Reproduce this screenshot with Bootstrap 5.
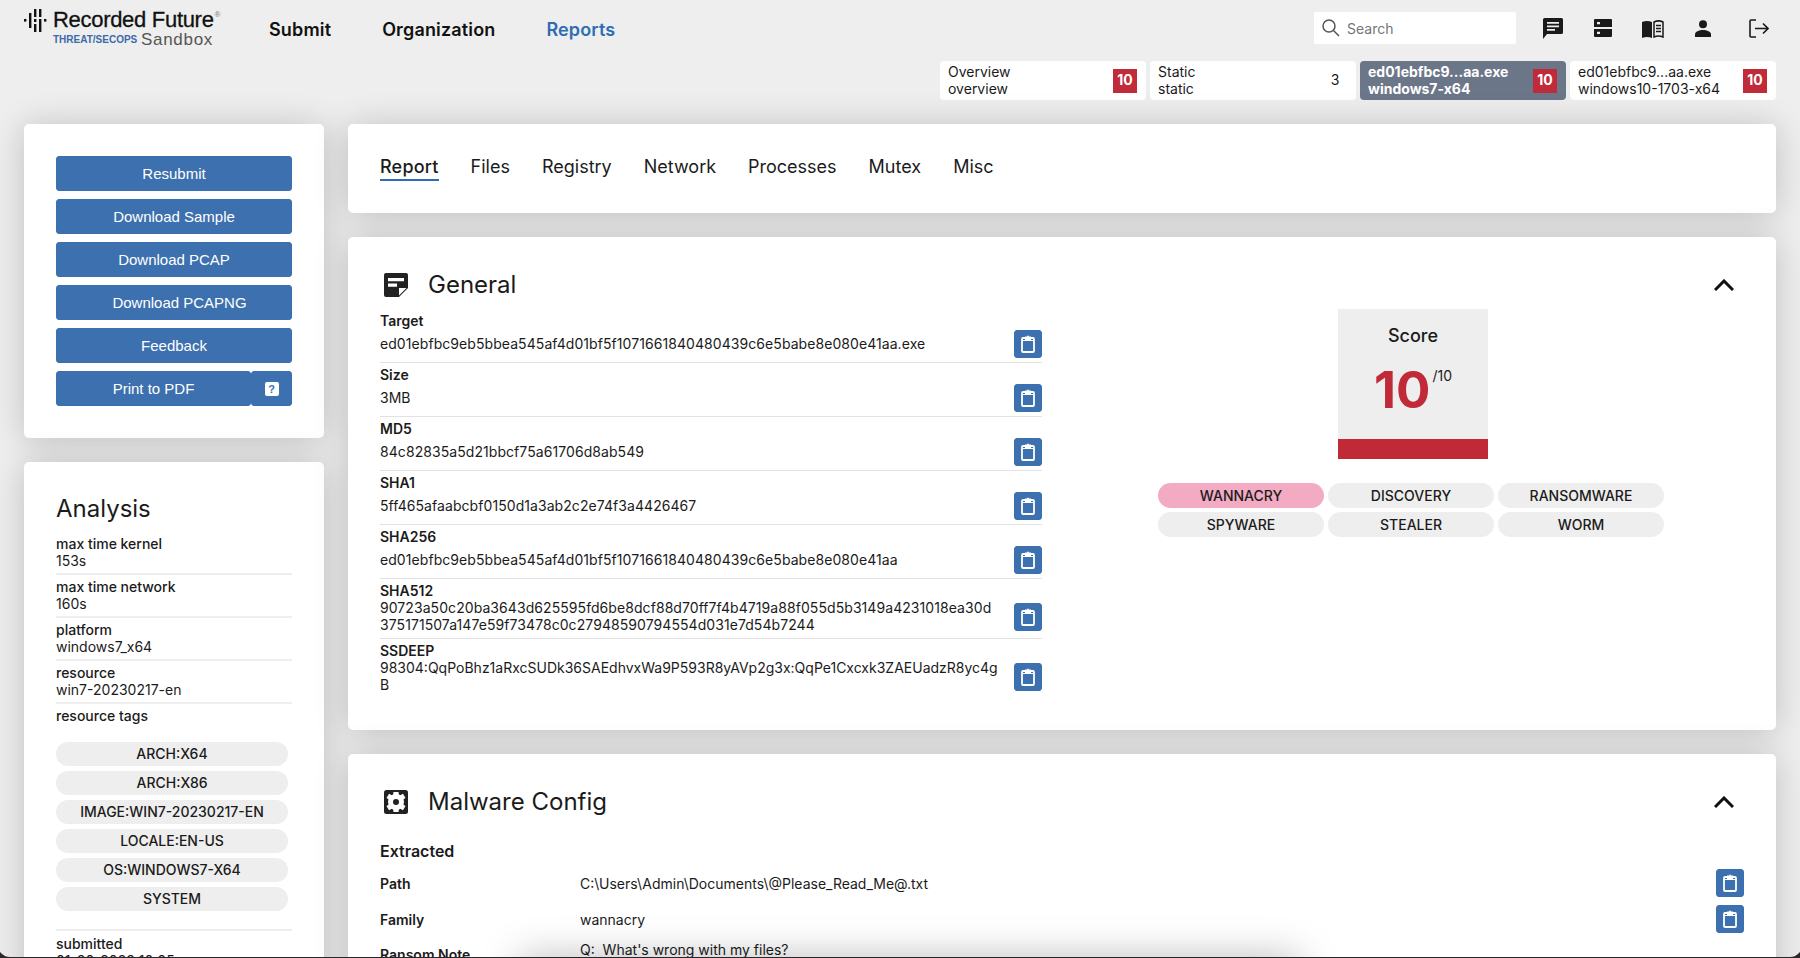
<!DOCTYPE html>
<html lang="en">
<head>
<meta charset="utf-8">
<title>Recorded Future Sandbox</title>
<link href="https://cdn.jsdelivr.net/npm/bootstrap@5.3.0/dist/css/bootstrap.min.css" rel="stylesheet">
<style>
html,body{height:958px;overflow:hidden}
body{background:#eee;font-family:Inter,"Liberation Sans",sans-serif;color:#1b1b1b;font-size:14px;line-height:17px}
.rf-top{height:61px;padding:0 24px;align-items:flex-start}
.rf-logo{width:245px;height:61px;position:relative;flex:none}
.rf-logo svg{position:absolute;left:0;top:8px}
.rf-logo-main{position:absolute;left:29px;top:6px;font:22px/28px "Liberation Sans",sans-serif;color:#111;letter-spacing:-.3px;white-space:nowrap;-webkit-text-stroke:.3px #111}
.rf-logo-main sup{font-size:8px;top:-1.2em;color:#777;margin-left:1px;-webkit-text-stroke:0}
.rf-logo-sub{position:absolute;left:29px;top:33px;font:bold 10px/13px "Liberation Sans",sans-serif;color:#3d6aa8;white-space:nowrap}
.rf-logo-box{position:absolute;left:117px;top:30px;font:17px/20px "Liberation Sans",sans-serif;color:#555;letter-spacing:.7px}
.rf-menu{gap:51px;padding-top:21px}
.rf-menu a{font-size:18px;line-height:18px;font-weight:600;color:#111;text-decoration:none;letter-spacing:.15px}
.rf-menu a.is-on{color:#2f6db3}
.rf-search{width:202px;height:32px;background:#fff;border-radius:2px;margin-top:12px;padding-left:8px;gap:7px;color:#757575}
.rf-icons{margin-top:18px;margin-left:27px;margin-right:7px;align-items:flex-start}
.rf-icons svg:nth-child(1){margin-right:31px}
.rf-icons svg:nth-child(2){margin-right:30px;margin-top:1px}
.rf-icons svg:nth-child(3){margin-right:31px;margin-top:2px}
.rf-icons svg:nth-child(4){margin-right:38px;margin-top:2px}
.rf-icons svg:nth-child(5){margin-top:1px}
.rf-sub{justify-content:flex-end;gap:4px;padding:0 24px;height:39px}
.rf-tab{width:206px;height:39px;background:#fff;border-radius:4px;padding:0 9px 0 8px;align-items:center;justify-content:space-between;line-height:16.5px;white-space:nowrap}
.rf-tab.is-on{background:#6c7689;color:#fff;font-weight:700}
.rf-num{width:24px;height:24px;display:flex;align-items:center;justify-content:center;background:#c12a38;color:#fff;font-weight:700;font-size:14px}
.rf-num.is-plain{background:none;color:#1b1b1b;font-weight:400}
.rf-page{gap:24px;padding:24px 24px 0;align-items:flex-start}
.rf-side{width:300px;flex:none;gap:24px}
.rf-main{flex:1;gap:24px;min-width:0}
.rf-panel{border:0;border-radius:5px;box-shadow:0 2px 34px rgba(0,0,0,.2);background:#fff;padding:32px}
.rf-actions{gap:8px;height:314px}
.rf-btn{--bs-btn-bg:#3d70ae;--bs-btn-border-color:#3a6fb0;--bs-btn-color:#fff;height:35px;padding:0;border-radius:3px;font:15px/33px "Liberation Sans",sans-serif;width:100%}
.rf-btn.is-off{padding-left:11px}
.rf-split .rf-btn:first-child{width:195px;flex:none}
.rf-split .rf-btn:last-child{flex:1;display:flex;align-items:center;justify-content:center}
.rf-help{width:14px;height:14px;background:#fff;border-radius:2px;color:#3d70ae;font:bold 11px/14px "Liberation Sans",sans-serif;text-align:center}
.rf-h{font-size:24px;line-height:30px;font-weight:400;margin:0}
.rf-analysis{padding-top:32px;height:560px}
.rf-analysis .rf-h{margin-bottom:7.5px}
.rf-meta{padding:3.5px 0 3.5px;height:43px;border-bottom:2px solid #eee;flex:none}
.rf-meta b{font-weight:500;display:block}
.rf-meta.is-open{border:0;height:auto}
.rf-tags{gap:4.5px;width:232px;margin:14px 0 17.5px;flex:none}
.rf-pill{background:#eee;border-radius:13px;height:24.5px;line-height:24.5px;text-align:center;font-weight:500;font-size:14px;text-transform:uppercase}
.rf-pill.is-fam{background:#f2abc2}
.rf-rule{border-top:2px solid #eee;padding-top:4px}
.rf-nav{height:89px;padding:0 32px;display:flex;align-items:center}
.rf-nav .nav{gap:32px}
.rf-nav .nav-link{padding:0 0 1px;font-size:18px;line-height:22px;color:#1b1b1b;border-bottom:2px solid transparent}
.rf-nav .nav-link.active{font-weight:500;border-bottom-color:#2f6db3;letter-spacing:.2px}
.rf-general{height:493px;padding-top:0;padding-bottom:0}
.rf-head-g{height:72px;flex:none;padding-top:24px;padding-left:4px;gap:20px;padding-right:10px}
.rf-chev{margin-left:auto}
.rf-cols{--bs-gutter-x:40px}
.rf-kv{padding:4px 0;border-bottom:1px solid #e2e2e2}
.rf-kv:last-child{border:0}
.rf-kv b{font-weight:600;display:block;margin:-1px 0 1px}
.rf-kv-body{min-height:28px;justify-content:space-between;align-items:center}
.rf-hash{white-space:nowrap;transform:translateY(-1px)}
.rf-hash.is-hex{letter-spacing:.067px}
.rf-copy{--bs-btn-bg:#3d70ae;--bs-btn-border-color:#3a6fb0;width:28px;height:28px;padding:0;flex:none;display:flex;align-items:center;justify-content:center;border-radius:3px}
.rf-score{width:150px;height:150px;background:#eee;margin:0 auto 24px;text-align:center;position:relative}
.rf-score-t{font-size:18px;font-weight:500;line-height:22px;padding-top:16px}
.rf-score-v{color:#c12a38;font-size:51px;line-height:50px;font-weight:700;margin-top:18px;display:flex;justify-content:center}
.rf-score-v sup{font-size:14px;font-weight:400;color:#1b1b1b;position:static;line-height:14px;margin:4px 0 0 2px}
.rf-score-bar{position:absolute;left:0;right:0;bottom:0;height:20px;background:#bf2a36}
.rf-pills{display:grid;grid-template-columns:repeat(3,1fr);gap:4px;width:510px;padding-right:4px;margin:0 auto}
.rf-pills .rf-pill{height:25px;line-height:25px}
.rf-cfg{padding-top:0;height:300px}
.rf-sec{font-size:16px;font-weight:600;line-height:20px;margin:15px 0 4px}
.rf-cfg-row{height:36px;flex:none;align-items:center}
.rf-cfg-row b{width:200px;flex:none;font-weight:600}
.rf-cfg-row .rf-copy{margin-left:auto}
.rf-cfg-row.is-long{align-items:flex-start;white-space:pre}
.rf-cfg-row.is-long b{padding-top:8.5px}
.rf-cfg-row.is-long span{padding-top:3.5px}
.rf-note{position:fixed;left:520px;width:780px;bottom:-40px;height:40px;box-shadow:0 0 40px rgba(0,0,0,.28);z-index:5}
.rf-frame{position:fixed;inset:0;overflow:hidden;pointer-events:none;z-index:9}
.rf-frame i{position:absolute;left:-2px;right:-2px;top:-30px;bottom:1px;border-radius:0 0 12px 12px;box-shadow:0 0 0 14px #2b2529}
</style>
</head>
<body>
<svg class="d-none"><symbol id="rf-clip" viewBox="0 0 14 18"><path fill="none" stroke="#fff" stroke-width="1.800" d="M4.500 3H2a1 1 0 0 0-1 1v12a1 1 0 0 0 1 1h10a1 1 0 0 0 1-1V4a1 1 0 0 0-1-1H9.500"/><path fill="#fff" d="M4 1.500h2l1-1.200 1 1.200h2V5H4z"/><path stroke="#fff" stroke-width="1" d="M1 5.500h12"/></symbol></svg>
<header>
  <div class="d-flex rf-top">
    <a class="rf-logo text-decoration-none" href="#">
      <svg width="28" height="26" viewBox="0 0 28 26"><g fill="#111"><rect x="0" y="11" width="2.400" height="2.600"/><rect x="5" y="5" width="2.400" height="15"/><rect x="10" y="1" width="2.400" height="8"/><rect x="10" y="11" width="2.400" height="3"/><rect x="10" y="16" width="2.400" height="8"/><rect x="15" y="1" width="2.400" height="8"/><rect x="15" y="11" width="2.400" height="13"/><rect x="20" y="11" width="2.400" height="2.600"/></g></svg>
      <span class="rf-logo-main">Recorded Future<sup>®</sup></span>
      <span class="rf-logo-sub">THREAT/SECOPS</span>
      <span class="rf-logo-box">Sandbox</span>
    </a>
    <nav class="d-flex rf-menu">
      <a href="#">Submit</a><a href="#">Organization</a><a href="#" class="is-on">Reports</a>
    </nav>
    <div class="ms-auto d-flex">
      <div class="d-flex align-items-center rf-search">
        <svg width="18" height="18" viewBox="0 0 18 18" fill="none" stroke="#555" stroke-width="1.500"><circle cx="7" cy="7" r="6"/><path d="M11.500 11.500 17 17"/></svg>
        <span>Search</span>
      </div>
      <div class="d-flex rf-icons">
        <svg width="20" height="21" viewBox="0 0 20 21"><path fill="#1a1a1a" d="M1.500 0h17A1.500 1.500 0 0 1 20 1.500v13a1.500 1.500 0 0 1-1.500 1.500H4l-4 5V1.500A1.500 1.500 0 0 1 1.500 0z"/><path fill="#eee" d="M4 4h12v1.800H4zM4 7.500h12v1.800H4zM4 11h8v1.800H4z"/></svg>
        <svg width="18" height="18" viewBox="0 0 18 18"><path fill="#1a1a1a" d="M1 0h16a1 1 0 0 1 1 1v7H0V1a1 1 0 0 1 1-1zM0 10h18v7a1 1 0 0 1-1 1H1a1 1 0 0 1-1-1z"/><path fill="#eee" d="M3 3h3v2.200H3zM3 12.800h3V15H3z"/></svg>
        <svg width="22" height="18" viewBox="0 0 22 18"><path fill="#1a1a1a" d="M0 2C3 .5 7 .5 10 2v16C7 16.500 3 16.500 0 18z"/><path fill="none" stroke="#1a1a1a" stroke-width="1.500" d="M12 2c3-1.500 6-1.500 9 0v15c-3-1.200-6-1.200-9 0z"/><path stroke="#1a1a1a" stroke-width="1.300" d="M14 5.500h5M14 8.500h5M14 11.500h5"/></svg>
        <svg width="16" height="17" viewBox="0 0 16 17"><circle fill="#1a1a1a" cx="8" cy="4.200" r="4"/><path fill="#1a1a1a" d="M0 17v-2.500C0 11.500 4 10 8 10s8 1.500 8 4.500V17z"/></svg>
        <svg width="20" height="19" viewBox="0 0 20 19" fill="none" stroke="#1a1a1a" stroke-width="1.600"><path d="M7 1H2a1 1 0 0 0-1 1v15a1 1 0 0 0 1 1h5M6 9.500h13M14 4.500l5 5-5 5"/></svg>
      </div>
    </div>
  </div>
  <div class="d-flex rf-sub">
    <div class="d-flex rf-tab"><div>Overview<br>overview</div><span class="rf-num">10</span></div>
    <div class="d-flex rf-tab"><div>Static<br>static</div><span class="rf-num is-plain">3</span></div>
    <div class="d-flex rf-tab is-on"><div>ed01ebfbc9...aa.exe<br>windows7-x64</div><span class="rf-num">10</span></div>
    <div class="d-flex rf-tab"><div>ed01ebfbc9...aa.exe<br>windows10-1703-x64</div><span class="rf-num">10</span></div>
  </div>
</header>
<div class="d-flex rf-page">
  <aside class="d-flex flex-column rf-side">
    <div class="card rf-panel rf-actions d-flex flex-column">
      <button class="btn btn-primary rf-btn">Resubmit</button>
      <button class="btn btn-primary rf-btn">Download Sample</button>
      <button class="btn btn-primary rf-btn">Download PCAP</button>
      <button class="btn btn-primary rf-btn is-off">Download PCAPNG</button>
      <button class="btn btn-primary rf-btn">Feedback</button>
      <div class="d-flex rf-split">
        <button class="btn btn-primary rf-btn">Print to PDF</button>
        <button class="btn btn-primary rf-btn"><span class="rf-help">?</span></button>
      </div>
    </div>
    <div class="card rf-panel rf-analysis">
      <h2 class="rf-h">Analysis</h2>
      <div class="rf-meta"><b>max time kernel</b>153s</div>
      <div class="rf-meta"><b>max time network</b>160s</div>
      <div class="rf-meta"><b>platform</b>windows7_x64</div>
      <div class="rf-meta"><b>resource</b>win7-20230217-en</div>
      <div class="rf-meta is-open"><b>resource tags</b></div>
      <div class="d-flex flex-column rf-tags">
        <div class="rf-pill">arch:x64</div>
        <div class="rf-pill">arch:x86</div>
        <div class="rf-pill">image:win7-20230217-en</div>
        <div class="rf-pill">locale:en-us</div>
        <div class="rf-pill">os:windows7-x64</div>
        <div class="rf-pill">system</div>
      </div>
      <div class="rf-meta rf-rule"><b>submitted</b>01-30-2023 10:05</div>
    </div>
  </aside>
  <main class="d-flex flex-column rf-main">
    <div class="card rf-panel rf-nav flex-row">
      <ul class="nav">
        <li class="nav-item"><a class="nav-link active" href="#">Report</a></li>
        <li class="nav-item"><a class="nav-link" href="#">Files</a></li>
        <li class="nav-item"><a class="nav-link" href="#">Registry</a></li>
        <li class="nav-item"><a class="nav-link" href="#">Network</a></li>
        <li class="nav-item"><a class="nav-link" href="#">Processes</a></li>
        <li class="nav-item"><a class="nav-link" href="#">Mutex</a></li>
        <li class="nav-item"><a class="nav-link" href="#">Misc</a></li>
      </ul>
    </div>
    <div class="card rf-panel rf-general">
      <div class="d-flex align-items-center rf-head-g">
        <svg width="24" height="24" viewBox="0 0 24 24"><path fill="#222" d="M2 0h20a2 2 0 0 1 2 2v13l-9 9H2a2 2 0 0 1-2-2V2a2 2 0 0 1 2-2z"/><path fill="#fff" d="M4 5h16v3.200H4zM4 10.500h9v3.200H4zM15 22.500V15h7.500z"/></svg>
        <h2 class="rf-h">General</h2>
        <svg class="rf-chev" width="20" height="12" viewBox="0 0 20 12" fill="none" stroke="#111" stroke-width="3"><path d="M1 11 10 2l9 9"/></svg>
      </div>
      <div class="row rf-cols">
        <div class="col-6">
          <div class="rf-kv"><b>Target</b><div class="d-flex rf-kv-body"><span class="rf-hash is-hex">ed01ebfbc9eb5bbea545af4d01bf5f1071661840480439c6e5babe8e080e41aa.exe</span><button class="btn btn-primary rf-copy"><svg width="14" height="18"><use href="#rf-clip"/></svg></button></div></div>
          <div class="rf-kv"><b>Size</b><div class="d-flex rf-kv-body"><span class="rf-hash">3MB</span><button class="btn btn-primary rf-copy"><svg width="14" height="18"><use href="#rf-clip"/></svg></button></div></div>
          <div class="rf-kv"><b>MD5</b><div class="d-flex rf-kv-body"><span class="rf-hash is-hex">84c82835a5d21bbcf75a61706d8ab549</span><button class="btn btn-primary rf-copy"><svg width="14" height="18"><use href="#rf-clip"/></svg></button></div></div>
          <div class="rf-kv"><b>SHA1</b><div class="d-flex rf-kv-body"><span class="rf-hash is-hex">5ff465afaabcbf0150d1a3ab2c2e74f3a4426467</span><button class="btn btn-primary rf-copy"><svg width="14" height="18"><use href="#rf-clip"/></svg></button></div></div>
          <div class="rf-kv"><b>SHA256</b><div class="d-flex rf-kv-body"><span class="rf-hash is-hex">ed01ebfbc9eb5bbea545af4d01bf5f1071661840480439c6e5babe8e080e41aa</span><button class="btn btn-primary rf-copy"><svg width="14" height="18"><use href="#rf-clip"/></svg></button></div></div>
          <div class="rf-kv"><b>SHA512</b><div class="d-flex rf-kv-body"><span class="rf-hash is-hex">90723a50c20ba3643d625595fd6be8dcf88d70ff7f4b4719a88f055d5b3149a4231018ea30d<br>375171507a147e59f73478c0c27948590794554d031e7d54b7244</span><button class="btn btn-primary rf-copy"><svg width="14" height="18"><use href="#rf-clip"/></svg></button></div></div>
          <div class="rf-kv"><b>SSDEEP</b><div class="d-flex rf-kv-body"><span class="rf-hash">98304:QqPoBhz1aRxcSUDk36SAEdhvxWa9P593R8yAVp2g3x:QqPe1Cxcxk3ZAEUadzR8yc4g<br>B</span><button class="btn btn-primary rf-copy"><svg width="14" height="18"><use href="#rf-clip"/></svg></button></div></div>
        </div>
        <div class="col-6">
          <div class="rf-score">
            <div class="rf-score-t">Score</div>
            <div class="rf-score-v">10<sup>/10</sup></div>
            <div class="rf-score-bar"></div>
          </div>
          <div class="rf-pills">
            <div class="rf-pill is-fam">wannacry</div><div class="rf-pill">discovery</div><div class="rf-pill">ransomware</div>
            <div class="rf-pill">spyware</div><div class="rf-pill">stealer</div><div class="rf-pill">worm</div>
          </div>
        </div>
      </div>
    </div>
    <div class="card rf-panel rf-cfg">
      <div class="d-flex align-items-center rf-head-g">
        <svg width="24" height="24" viewBox="0 0 24 24"><rect width="24" height="24" rx="2.500" fill="#222"/><g fill="#fff"><circle cx="12" cy="12" r="8"/><path d="M9.500 2h5l.6 4h-6.200zM9.500 22h5l.6-4h-6.200zM2.500 8l2.500-4.300 3.700 2-2.800 4.300zM21.500 8 19 3.700l-3.700 2 2.800 4.300zM2.500 16 5 20.300l3.700-2-2.800-4.300zM21.500 16 19 20.300l-3.700-2 2.800-4.300z"/></g><circle cx="12" cy="12" r="3" fill="#222"/></svg>
        <h2 class="rf-h">Malware Config</h2>
        <svg class="rf-chev" width="20" height="12" viewBox="0 0 20 12" fill="none" stroke="#111" stroke-width="3"><path d="M1 11 10 2l9 9"/></svg>
      </div>
      <div class="rf-sec">Extracted</div>
      <div class="d-flex rf-cfg-row"><b>Path</b><span>C:\Users\Admin\Documents\@Please_Read_Me@.txt</span><button class="btn btn-primary rf-copy"><svg width="14" height="18"><use href="#rf-clip"/></svg></button></div>
      <div class="d-flex rf-cfg-row"><b>Family</b><span>wannacry</span><button class="btn btn-primary rf-copy"><svg width="14" height="18"><use href="#rf-clip"/></svg></button></div>
      <div class="d-flex rf-cfg-row is-long"><b>Ransom Note</b><span>Q:  What's wrong with my files?</span></div>
    </div>
  </main>
</div>
<div class="rf-note"></div>
<div class="rf-frame"><i></i></div>
<script src="https://cdn.jsdelivr.net/npm/bootstrap@5.3.0/dist/js/bootstrap.bundle.min.js"></script>
</body>
</html>
